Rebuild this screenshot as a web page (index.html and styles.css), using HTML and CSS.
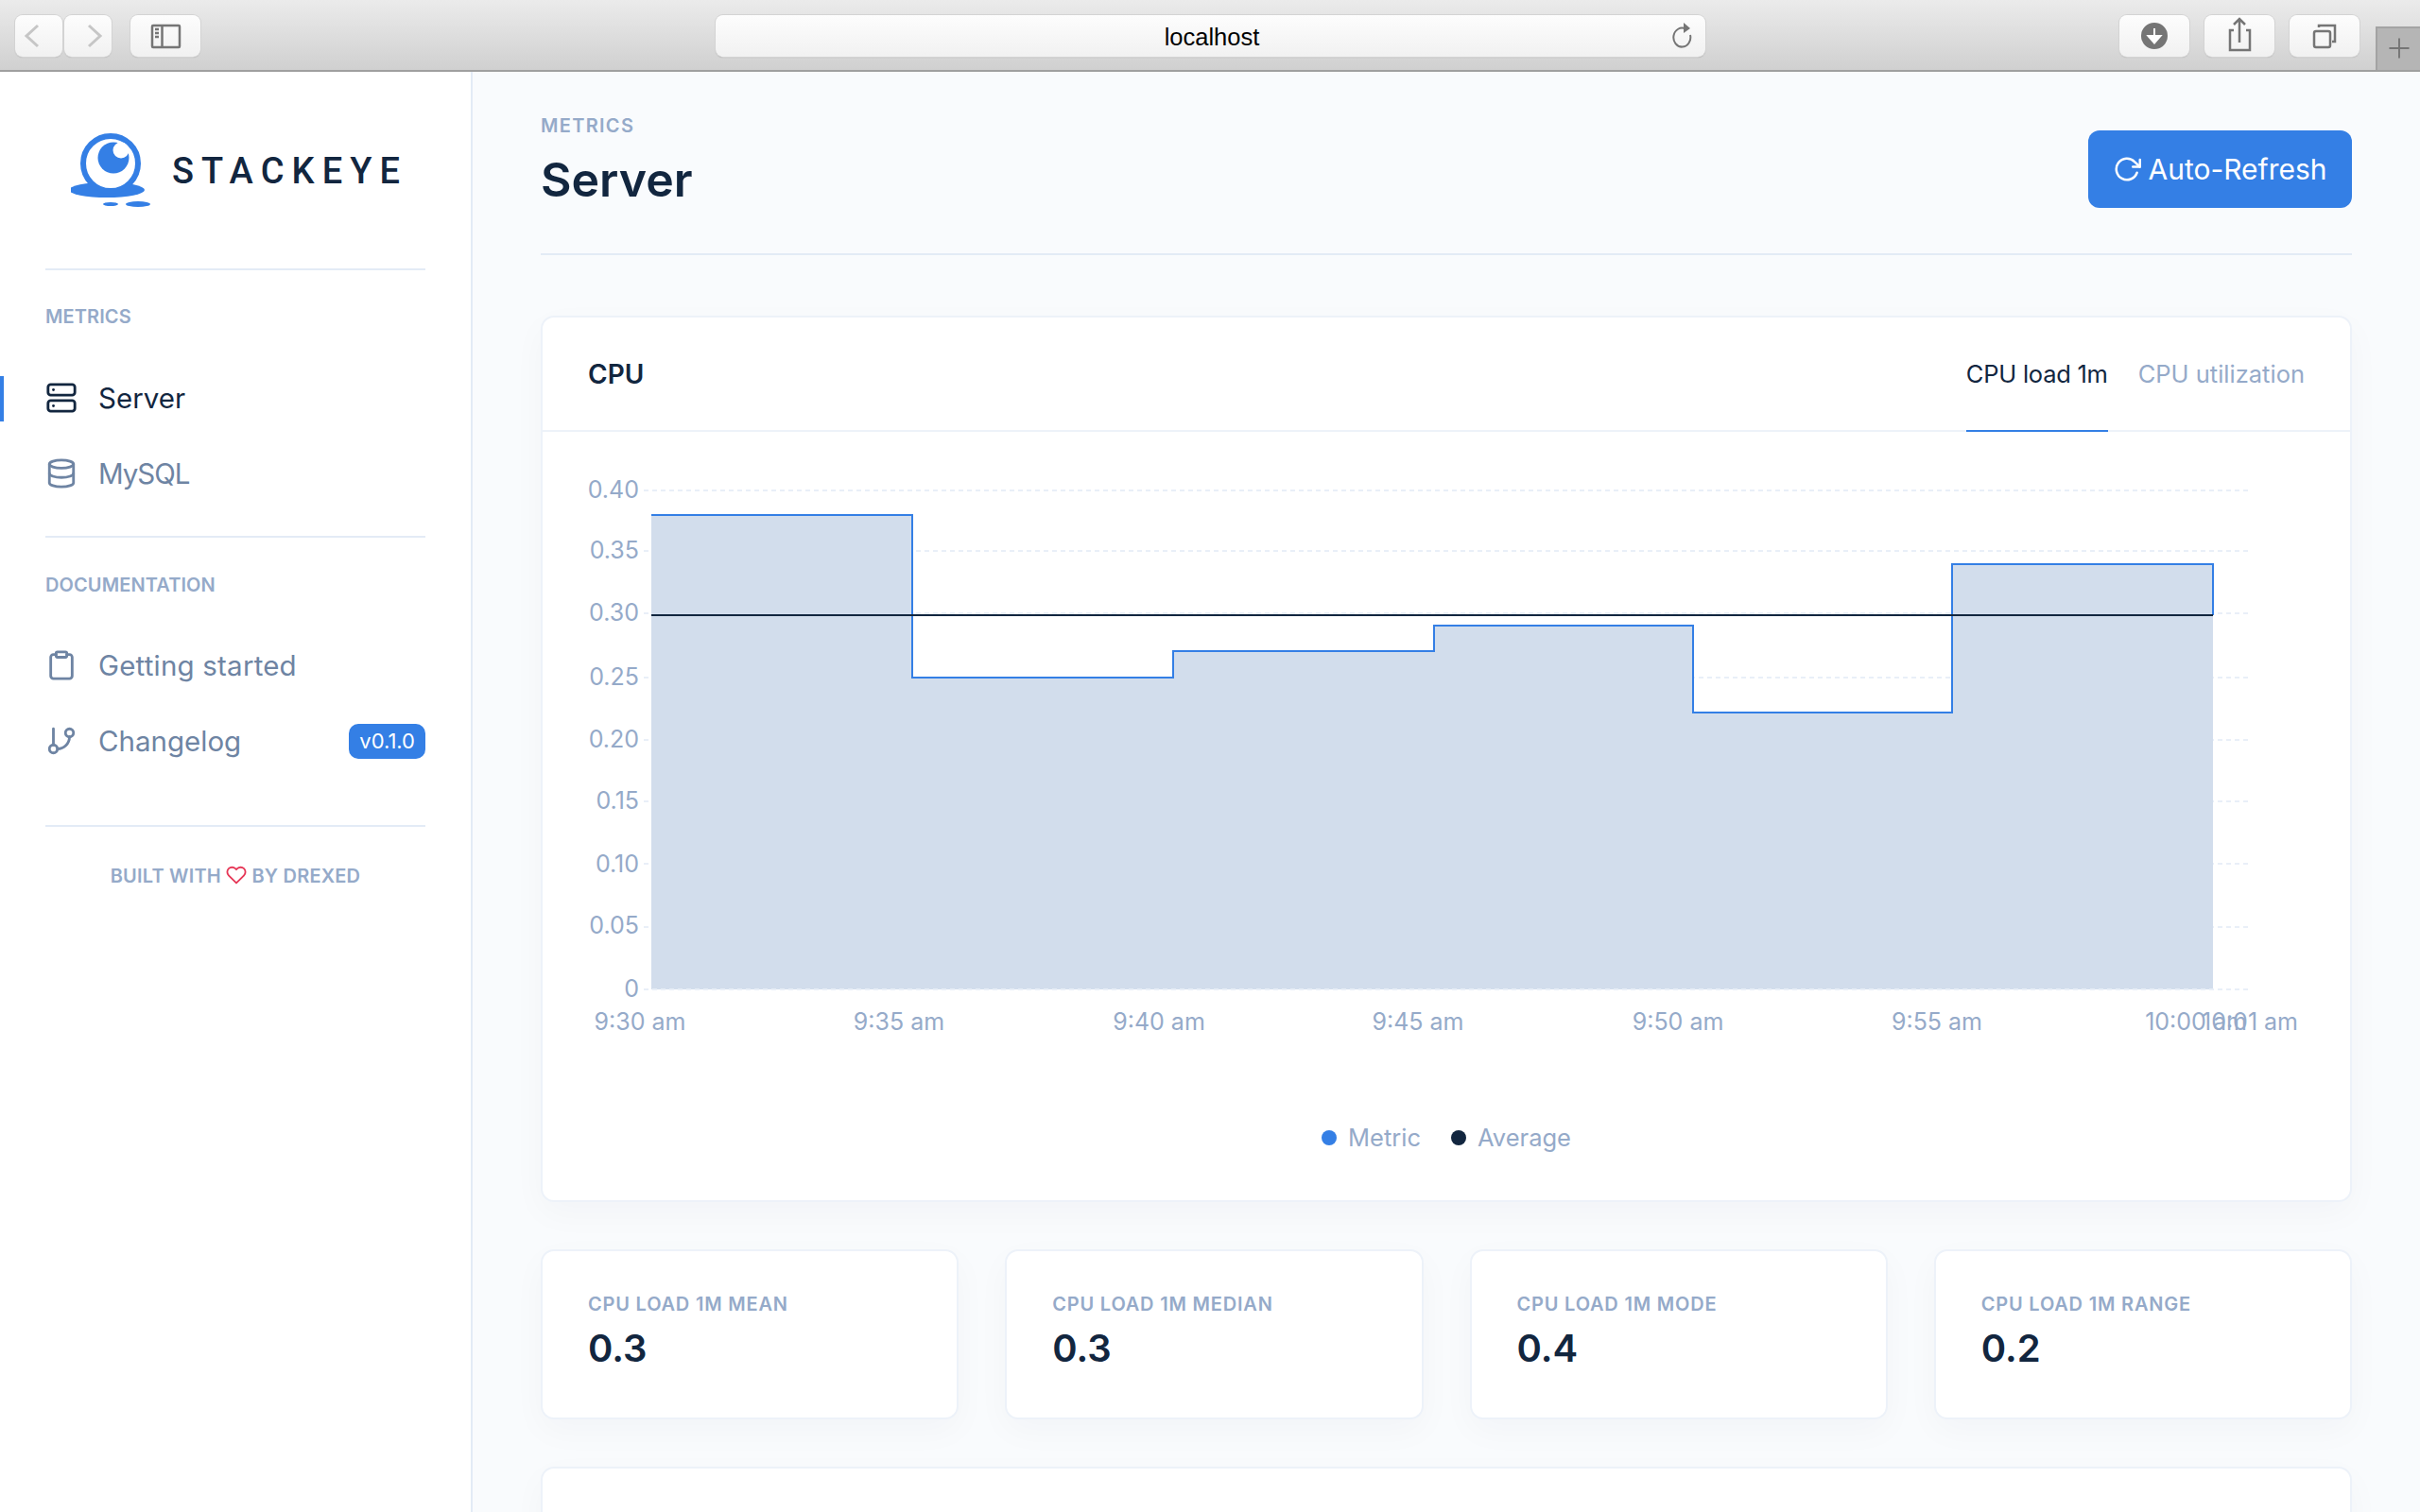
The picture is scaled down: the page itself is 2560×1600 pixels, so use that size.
FILE: index.html
```html
<!DOCTYPE html>
<html lang="en">
<head>
<meta charset="utf-8">
<title>StackEye</title>
<link rel="stylesheet" href="styles.css">
</head>
<body>
<div class="app">
  <header class="toolbar">
    <div class="tb-group tb-nav">
      <button class="tb-btn tb-arrow"><svg viewBox="0 0 50 44" class="tb-svg"><path d="M24 11 L12 22 L24 33" class="tb-dim"/></svg></button>
      <button class="tb-btn tb-arrow"><svg viewBox="0 0 50 44" class="tb-svg"><path d="M26 11 L38 22 L26 33" class="tb-dim"/></svg></button>
      <button class="tb-btn tb-wide tb-side"><svg viewBox="0 0 74 44" class="tb-svg"><rect x="23" y="11" width="29" height="23" rx="1" class="tb-ink"/><path d="M33.500 11V34" class="tb-ink"/><path d="M26 15h4M26 19h4M26 23h4" class="tb-ink"/></svg></button>
    </div>
    <div class="url">
      <span class="url-text">localhost</span>
      <svg viewBox="0 0 24 32" class="url-reload"><path d="M15 8.500A9 10 0 1 0 20 15" class="tb-ink tb-thin"/><path d="M13 2 L20 8 L13 13z" class="tb-fill"/></svg>
    </div>
    <div class="tb-group tb-right">
      <button class="tb-btn tb-wide"><svg viewBox="0 0 74 44" class="tb-svg"><circle cx="37" cy="22" r="14" class="tb-fill"/><path d="M37 14v13M30.500 22 37 29.500 43.500 22z" class="tb-white"/></svg></button>
      <button class="tb-btn tb-wide"><svg viewBox="0 0 74 44" class="tb-svg"><path d="M31 19h-4v21h21V19h-4M37 32V8M31 13l6-6 6 6" class="tb-ink" transform="translate(0 -3)"/></svg></button>
      <button class="tb-btn tb-wide"><svg viewBox="0 0 74 44" class="tb-svg"><rect x="26" y="17" width="17" height="17" rx="2" class="tb-ink"/><path d="M31 13v-2h17v17h-3" class="tb-ink"/></svg></button>
    </div>
    <div class="new-tab"><svg viewBox="0 0 47 46" class="tb-svg"><path d="M24 11v22M13 22h22" class="tb-ink tb-thin"/></svg></div>
  </header>

  <div class="layout">
    <aside class="sidebar">
      <a class="brand">
        <svg class="brand-logo" viewBox="0 0 90 80">
          <ellipse cx="38" cy="61" rx="40" ry="8" class="logo-blue"/>
          <circle cx="42" cy="33" r="29" class="logo-ring"/>
          <circle cx="45" cy="27" r="16.500" class="logo-blue"/>
          <circle cx="53" cy="19" r="8.500" class="logo-white"/>
          <ellipse cx="42" cy="76" rx="8" ry="2" class="logo-blue"/>
          <ellipse cx="71" cy="76" rx="13" ry="3" class="logo-blue"/>
        </svg>
        <span class="brand-name">STACKEYE</span>
      </a>

      <nav class="nav-section">
        <h6 class="nav-label">METRICS</h6>
        <a class="nav-item active">
          <svg class="ficon" viewBox="0 0 24 24"><rect x="2" y="2" width="20" height="8" rx="2"/><rect x="2" y="14" width="20" height="8" rx="2"/><line x1="6" y1="6" x2="6.010" y2="6"/><line x1="6" y1="18" x2="6.010" y2="18"/></svg>
          <span>Server</span>
        </a>
        <a class="nav-item nav-tight">
          <svg class="ficon" viewBox="0 0 24 24"><ellipse cx="12" cy="5" rx="9" ry="3"/><path d="M21 12c0 1.660-4 3-9 3s-9-1.340-9-3"/><path d="M3 5v14c0 1.660 4 3 9 3s9-1.340 9-3V5"/></svg>
          <span>MySQL</span>
        </a>
      </nav>

      <nav class="nav-section nav-docs">
        <h6 class="nav-label">DOCUMENTATION</h6>
        <a class="nav-item nav-loose">
          <svg class="ficon" viewBox="0 0 24 24"><path d="M16 4h2a2 2 0 0 1 2 2v14a2 2 0 0 1-2 2H6a2 2 0 0 1-2-2V6a2 2 0 0 1 2-2h2"/><rect x="8" y="2" width="8" height="4" rx="1"/></svg>
          <span>Getting started</span>
        </a>
        <a class="nav-item">
          <svg class="ficon" viewBox="0 0 24 24"><line x1="6" y1="3" x2="6" y2="15"/><circle cx="18" cy="6" r="3"/><circle cx="6" cy="18" r="3"/><path d="M18 9a9 9 0 0 1-9 9"/></svg>
          <span>Changelog</span>
          <span class="badge">v0.1.0</span>
        </a>
      </nav>

      <p class="built">BUILT WITH
        <svg class="heart" viewBox="0 0 24 24"><path d="M20.840 4.610a5.500 5.500 0 0 0-7.780 0L12 5.670l-1.060-1.060a5.500 5.500 0 0 0-7.780 7.780l1.060 1.060L12 21.230l7.780-7.780 1.060-1.060a5.500 5.500 0 0 0 0-7.780z"/></svg>
        BY DREXED</p>
    </aside>

    <main class="main">
      <div class="page-head">
        <div>
          <h6 class="pretitle">METRICS</h6>
          <h1 class="title">Server</h1>
        </div>
        <button class="refresh">
          <svg class="ficon refresh-icon" viewBox="0 0 24 24"><polyline points="23 4 23 10 17 10"/><path d="M20.490 15a9 9 0 1 1-2.120-9.360L23 10"/></svg>
          Auto-Refresh
        </button>
      </div>

      <section class="card chart-card">
        <div class="card-head">
          <h4 class="card-title">CPU</h4>
          <div class="tabs">
            <a class="tab active">CPU load 1m</a>
            <a class="tab">CPU utilization</a>
          </div>
        </div>
        <svg class="chart" viewBox="574 458 1912 710">
          <g class="grid">
            <line x1="681" x2="2382" y1="519" y2="519"/>
            <line x1="681" x2="2382" y1="583" y2="583"/>
            <line x1="681" x2="2382" y1="649" y2="649"/>
            <line x1="681" x2="2382" y1="717" y2="717"/>
            <line x1="681" x2="2382" y1="783" y2="783"/>
            <line x1="681" x2="2382" y1="848" y2="848"/>
            <line x1="681" x2="2382" y1="914" y2="914"/>
            <line x1="681" x2="2382" y1="981" y2="981"/>
          </g>
          <path class="area" d="M689 545H965V717H1241V689H1517V662H1791V754H2065V597H2341V1047H689Z"/>
          <line class="grid-base" x1="681" x2="2382" y1="1047" y2="1047"/>
          <path class="step" d="M689 545H965V717H1241V689H1517V662H1791V754H2065V597H2341V651"/>
          <line class="avg" x1="689" x2="2341" y1="651" y2="651"/>
          <g class="ylabels">
            <text x="676" y="527">0.40</text>
            <text x="676" y="591">0.35</text>
            <text x="676" y="657">0.30</text>
            <text x="676" y="725">0.25</text>
            <text x="676" y="791">0.20</text>
            <text x="676" y="856">0.15</text>
            <text x="676" y="923">0.10</text>
            <text x="676" y="988">0.05</text>
            <text x="676" y="1055">0</text>
          </g>
          <g class="xlabels">
            <text x="677" y="1090">9:30 am</text>
            <text x="951" y="1090">9:35 am</text>
            <text x="1226" y="1090">9:40 am</text>
            <text x="1500" y="1090">9:45 am</text>
            <text x="1775" y="1090">9:50 am</text>
            <text x="2049" y="1090">9:55 am</text>
            <text x="2323" y="1090">10:00 am</text>
            <text x="2380" y="1090">10:01 am</text>
          </g>
        </svg>
        <div class="legend">
          <span class="legend-item"><i class="dot dot-metric"></i>Metric</span>
          <span class="legend-item"><i class="dot dot-avg"></i>Average</span>
        </div>
      </section>

      <div class="stats">
        <div class="card stat"><h6 class="stat-label">CPU LOAD 1M MEAN</h6><span class="stat-value">0.3</span></div>
        <div class="card stat"><h6 class="stat-label">CPU LOAD 1M MEDIAN</h6><span class="stat-value">0.3</span></div>
        <div class="card stat"><h6 class="stat-label">CPU LOAD 1M MODE</h6><span class="stat-value">0.4</span></div>
        <div class="card stat"><h6 class="stat-label">CPU LOAD 1M RANGE</h6><span class="stat-value">0.2</span></div>
      </div>

      <section class="card next-card"></section>
    </main>
  </div>
</div>
</body>
</html>
```

FILE: styles.css
```css
* { box-sizing: border-box; }
html, body { margin: 0; height: 100%; overflow: hidden; }
body { font-family: Inter, "Noto Sans", sans-serif; color: #12263f; background: #f9fbfd; }
h1, h4, h6, p { margin: 0; }
button { font: inherit; border: 0; padding: 0; }

.app { height: 100vh; display: flex; flex-direction: column; }

/* Browser chrome */
.toolbar {
  height: 76px; flex: none; display: flex; align-items: flex-start; position: relative;
  padding: 16px 0 0 16px;
  background: linear-gradient(#ebebeb, #d0d0d0);
  border-bottom: 2px solid #9f9f9f;
}
.tb-group { display: flex; }
.tb-nav { width: 741px; }
.tb-btn {
  height: 44px; width: 50px; margin-right: 2px; display: block;
  background: linear-gradient(#fdfdfd, #f1f1f1);
  border-radius: 8px; box-shadow: 0 0 0 1px #d3d3d3, 0 1px 1px #aaa;
}
.tb-wide { width: 74px; margin-right: 16px; }
.tb-side { margin-left: 18px; }
.tb-svg { display: block; width: 100%; height: 100%; fill: none; }
.tb-dim { fill: none; stroke: #c6c6c6; stroke-width: 3; }
.tb-ink { fill: none; stroke: #757575; stroke-width: 2.500; }
.tb-thin { stroke-width: 2; }
.tb-fill { fill: #757575; }
.tb-white { fill: #fff; stroke: #fff; stroke-width: 2; }
.url {
  width: 1047px; height: 44px; padding: 2px 0 0 3px; position: relative; display: flex; align-items: center; justify-content: center;
  background: linear-gradient(#fdfdfd, #f1f1f1);
  border-radius: 8px; box-shadow: 0 0 0 1px #d3d3d3, 0 1px 1px #999;
}
.url-text { font-family: "Liberation Sans", Arial, sans-serif; font-size: 25.500px; color: #000; }
.url-reload { position: absolute; right: 12px; top: 6px; width: 24px; height: 32px; fill: none; }
.tb-right { margin-left: 438px; }
.new-tab {
  position: absolute; right: 0; bottom: 0; width: 47px; height: 46px;
  background: #b5b5b5; border: 2px solid #a3a3a3; border-bottom: 0; border-right: 0;
}

/* Layout */
.layout { flex: 1; display: flex; min-height: 0; }

/* Sidebar */
.sidebar {
  width: 500px; flex: none; background: #fff; border-right: 2px solid #e3ebf6;
  padding: 0 48px;
}
.brand { height: 210px; display: flex; align-items: flex-start; border-bottom: 2px solid #e3ebf6; padding: 64px 0 0 27px; }
.brand-logo { width: 90px; height: 80px; flex: none; fill: none; }
.logo-blue { fill: #347fe5; }
.logo-white { fill: #fff; }
.logo-ring { fill: #fff; stroke: #347fe5; stroke-width: 6; }
.brand-name {
  font-family: Roboto, sans-serif; font-weight: 500; font-size: 38px; line-height: 38px;
  letter-spacing: 8.100px; color: #12263f; margin: 22px 0 0 17px;
}
.nav-section { padding-top: 37px; }
.nav-docs { border-top: 2px solid #e3ebf6; margin-top: 26px; padding-top: 38px; padding-bottom: 49px; border-bottom: 2px solid #e3ebf6; }
.nav-label { font-size: 20px; line-height: 24px; font-weight: 600; letter-spacing: 0.100px; color: #95aac9; margin-bottom: 34px; }
.nav-docs .nav-label { margin-bottom: 33px; }
.nav-item { height: 80px; display: flex; align-items: center; gap: 22px; font-size: 29.500px; color: #6e84a3; position: relative; }
.nav-tight { letter-spacing: -1px; }
.nav-loose { letter-spacing: 0.200px; }
.nav-item.active { color: #12263f; }
.nav-item.active::before {
  content: ""; position: absolute; left: -48px; top: 17px; width: 4px; height: 48px; background: #347fe5;
}
.ficon { width: 34px; height: 34px; flex: none; fill: none; stroke: currentColor; stroke-width: 2; stroke-linecap: round; stroke-linejoin: round; }
.badge {
  margin-left: auto; height: 37px; padding: 0 11px; border-radius: 10px; background: #347fe5; color: #fff;
  font-size: 22px; line-height: 37px; letter-spacing: 0;
}
.built {
  text-align: center; font-size: 20px; font-weight: 600; letter-spacing: 0.200px; color: #95aac9;
  margin-top: 40px; line-height: 24px;
}
.heart { width: 22px; height: 22px; vertical-align: -3px; fill: none; stroke: #e63757; stroke-width: 2; stroke-linecap: round; stroke-linejoin: round; }

/* Main */
.main { flex: 1; min-width: 0; padding: 0 72px; overflow: hidden; }
.page-head {
  height: 194px; padding-top: 49px; display: flex; justify-content: space-between; align-items: flex-start;
  border-bottom: 2px solid #e3ebf6; margin-bottom: 64px;
}
.pretitle { font-size: 20px; line-height: 16px; font-weight: 600; letter-spacing: 1.300px; color: #95aac9; }
.title { font-size: 50px; line-height: 60px; font-weight: 600; margin-top: 19px; }
.refresh {
  width: 279px; height: 82px; margin-top: 13px; border-radius: 12px; background: #347fe5; color: #fff;
  font-size: 30px; display: flex; align-items: center; justify-content: center; gap: 7px;
}
.refresh-icon { width: 30px; height: 30px; }

.card { background: #fff; border: 2px solid #edf2f9; border-radius: 14px; box-shadow: 0 12px 36px rgba(18, 38, 63, 0.03); }
.chart-card { height: 938px; }
.card-head {
  height: 121px; display: flex; align-items: center; justify-content: space-between;
  padding: 0 48px; border-bottom: 2px solid #edf2f9;
}
.card-title { font-size: 28px; font-weight: 600; }
.tabs { display: flex; gap: 32px; height: 100%; }
.tab { font-size: 25.500px; color: #95aac9; display: flex; align-items: center; border-bottom: 2px solid transparent; margin-bottom: -2px; }
.tab.active { color: #12263f; border-bottom-color: #347fe5; letter-spacing: -0.250px; }

.chart { display: block; width: 1912px; height: 710px; margin-top: 1px; }
.grid line, .grid-base { stroke: #e9eff8; stroke-width: 2; stroke-dasharray: 5 4; }
.area { fill: #d2ddec; }
.step { fill: none; stroke: #347fe5; stroke-width: 2; }
.avg { stroke: #12263f; stroke-width: 2; }
.ylabels text { fill: #95aac9; font-size: 25px; text-anchor: end; }
.xlabels text { fill: #95aac9; font-size: 25px; text-anchor: middle; }

.legend { display: flex; justify-content: center; gap: 32px; font-size: 25.500px; color: #95aac9; margin-top: 20px; }
.legend-item { display: flex; align-items: center; gap: 12px; }
.dot { width: 16px; height: 16px; border-radius: 50%; }
.dot-metric { background: #347fe5; }
.dot-avg { background: #12263f; }

.stats { display: grid; grid-template-columns: repeat(4, 1fr); gap: 49px; margin-top: 50px; }
.stat { height: 180px; padding: 44px 48px 0; }
.stat-label { font-size: 20px; line-height: 24px; font-weight: 600; letter-spacing: 0.800px; color: #95aac9; }
.stat-value { display: block; font-size: 40px; line-height: 48px; font-weight: 600; margin-top: 11px; }
.next-card { height: 300px; margin-top: 50px; }
```
